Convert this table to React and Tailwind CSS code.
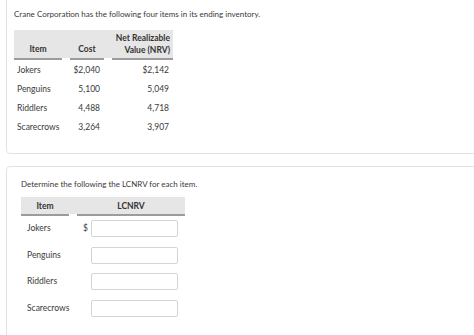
import React from "react";

const inventory = [
  { item: "Jokers", cost: "$2,040", nrv: "$2,142" },
  { item: "Penguins", cost: "5,100", nrv: "5,049" },
  { item: "Riddlers", cost: "4,488", nrv: "4,718" },
  { item: "Scarecrows", cost: "3,264", nrv: "3,907" },
];

export default function App() {
  return (
    <div
      className="w-[474px] h-[335px] overflow-hidden bg-white pl-[6px] text-[#3a3a3a]"
      style={{ fontFamily: "Lato, 'Open Sans', sans-serif" }}
    >
      {/* given data */}
      <div className="w-[480px] h-[165px] -mt-[11px] border border-[#e3e3e3] rounded-[4px] pl-[7px]">
        <p className="mt-[18px] text-[8px] leading-[12px]">
          Crane Corporation has the following four items in its ending inventory.
        </p>
        <div className="mt-[10px] w-[159px] text-[8.5px]">
          <div className="flex bg-[#e6e6e6] h-[30px] font-bold text-[#333]">
            <div className="w-[48px] flex items-end justify-center pb-[2px] border-b-2 border-[#9c9c9c]">Item</div>
            <div className="w-[8px] border-b-2 border-white" />
            <div className="w-[34px] flex items-end justify-center pb-[2px] border-b-2 border-[#9c9c9c]">Cost</div>
            <div className="w-[8px] border-b-2 border-white" />
            <div className="w-[61px] flex items-end justify-end pr-[3px] pb-[2px] border-b-2 border-[#9c9c9c] text-right leading-[12px]">
              Net Realizable<br />Value (NRV)
            </div>
          </div>
          {inventory.map((r) => (
            <div key={r.item} className="flex h-[19px] items-center pt-[1px]">
              <div className="w-[48px] pl-[3px]">{r.item}</div>
              <div className="w-[8px]" />
              <div className="w-[34px] text-right pr-[4px]">{r.cost}</div>
              <div className="w-[8px]" />
              <div className="w-[61px] text-right pr-[4px]">{r.nrv}</div>
            </div>
          ))}
        </div>
      </div>

      {/* answer entry */}
      <div className="w-[480px] h-[200px] mt-[12px] border border-[#e3e3e3] rounded-[4px] pl-[14px]">
        <p className="mt-[11px] text-[8px] leading-[12px]">
          Determine the following the LCNRV for each item.
        </p>
        <div className="mt-[7px] w-[164px] text-[8.5px]">
          <div className="flex bg-[#e6e6e6] h-[19px] font-bold text-[#333]">
            <div className="w-[48px] flex items-center justify-center pt-[2px] border-b-2 border-[#9c9c9c]">Item</div>
            <div className="w-[8px] border-b-2 border-white" />
            <div className="w-[108px] flex items-center justify-center pt-[2px] border-b-2 border-[#9c9c9c]">LCNRV</div>
          </div>
          <div className="pt-[4px]">
            {inventory.map((r, i) => (
              <div key={r.item} className="flex h-[26.67px] items-start">
                <div className="w-[48px] pl-[6px] h-[17px] flex items-center">{r.item}</div>
                <div className="w-[22px] h-[17px] flex items-center justify-end pr-[3px]">{i === 0 ? "$" : ""}</div>
                <input
                  type="text"
                  className="w-[87px] h-[17px] border border-[#d4d4d4] rounded-[2px] bg-white outline-none"
                />
              </div>
            ))}
          </div>
        </div>
      </div>
    </div>
  );
}
